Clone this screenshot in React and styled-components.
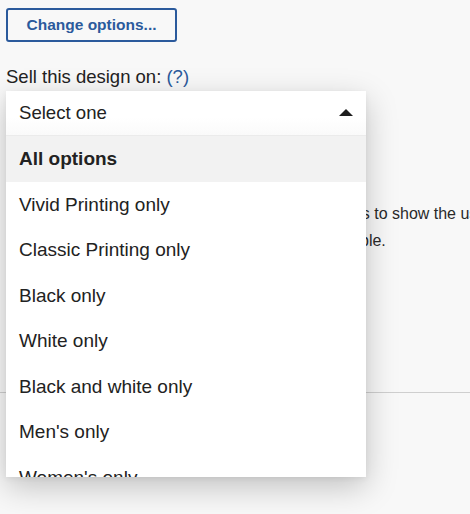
import React from "react";
import styled, { createGlobalStyle } from "styled-components";

const GlobalStyle = createGlobalStyle`
  html, body {
    margin: 0;
    padding: 0;
    overflow: hidden;
    background: #f8f8f8;
  }
  body {
    font-family: "Liberation Sans", Arial, sans-serif;
    color: #222;
  }
`;

const Page = styled.div`
  width: 470px;
  height: 514px;
  box-sizing: border-box;
  padding-top: 8px;
  background: #f8f8f8;
  overflow: hidden;
`;

const Section = styled.div`
  padding: 0 0 0 6px;
`;

const OutlineButton = styled.button`
  box-sizing: border-box;
  width: 171px;
  height: 34px;
  border: 2px solid #2b5a9c;
  border-radius: 3px;
  background: transparent;
  color: #2b5a9c;
  font-family: "Liberation Sans", Arial, sans-serif;
  font-weight: 700;
  font-size: 15.5px;
  padding: 0;
  cursor: pointer;
`;

const FieldLabel = styled.div`
  margin-top: 23px;
  font-size: 18.5px;
  line-height: 24px;
  color: #222;
`;

const HelpLink = styled.a`
  color: #2b5a9c;
  text-decoration: none;
`;

const SelectSlot = styled.div`
  position: relative;
  margin-top: 2px;
  height: 44px;
  z-index: 2;
`;

const Popup = styled.div`
  position: absolute;
  top: 0;
  left: 0;
  width: 360px;
  height: 386px;
  background: #fff;
  box-shadow: 0 10px 30px rgba(0, 0, 0, 0.22), 0 2px 6px rgba(0, 0, 0, 0.06);
  display: flex;
  flex-direction: column;
  overflow: hidden;
`;

const SelectHeader = styled.div`
  flex: 0 0 44px;
  display: flex;
  align-items: center;
  justify-content: space-between;
  padding: 0 13px;
  background: linear-gradient(#ffffff 60%, #fafafa);
  border-bottom: 1px solid #ebebeb;
  font-size: 18.6px;
  line-height: 44px;
`;

const Caret = styled.span`
  width: 0;
  height: 0;
  border-left: 7px solid transparent;
  border-right: 7px solid transparent;
  border-bottom: 7px solid #1e1e1e;
  margin-top: -2px;
`;

const OptionList = styled.ul`
  list-style: none;
  margin: 0;
  padding: 0;
  flex: 1;
  overflow: hidden;
`;

const Option = styled.li`
  height: 45.5px;
  line-height: 45.5px;
  padding: 0 13px;
  font-size: 19px;
  white-space: nowrap;
  background: ${(p) => (p.$active ? "#f2f2f2" : "#fff")};
  font-weight: ${(p) => (p.$active ? 700 : 400)};
  color: #222;
`;

const Note = styled.p`
  margin: 65px 0 0;
  font-size: 16px;
  line-height: 27px;
  color: #2a2a2a;
  white-space: nowrap;
  overflow: hidden;
`;

const Divider = styled.hr`
  margin: 138px 0 0;
  border: 0;
  border-top: 1px solid #cfcfcf;
  width: 100%;
`;

const options = [
  "All options",
  "Vivid Printing only",
  "Classic Printing only",
  "Black only",
  "White only",
  "Black and white only",
  "Men's only",
  "Women's only",
  "Kids only",
];

export default function App() {
  return (
    <>
      <GlobalStyle />
      <Page>
        <Section>
          <OutlineButton>Change options...</OutlineButton>
          <FieldLabel>
            Sell this design on: <HelpLink href="#">(?)</HelpLink>
          </FieldLabel>
          <SelectSlot>
            <Popup>
              <SelectHeader>
                <span>Select one</span>
                <Caret />
              </SelectHeader>
              <OptionList>
                {options.map((o, i) => (
                  <Option key={o} $active={i === 0}>
                    {o}
                  </Option>
                ))}
              </OptionList>
            </Popup>
          </SelectSlot>
          <Note>
            Limit this design to certain product colors and types to show the users
            <br />
            that fit it best and hide the ones that are not available.
          </Note>
        </Section>
        <Divider />
      </Page>
    </>
  );
}
